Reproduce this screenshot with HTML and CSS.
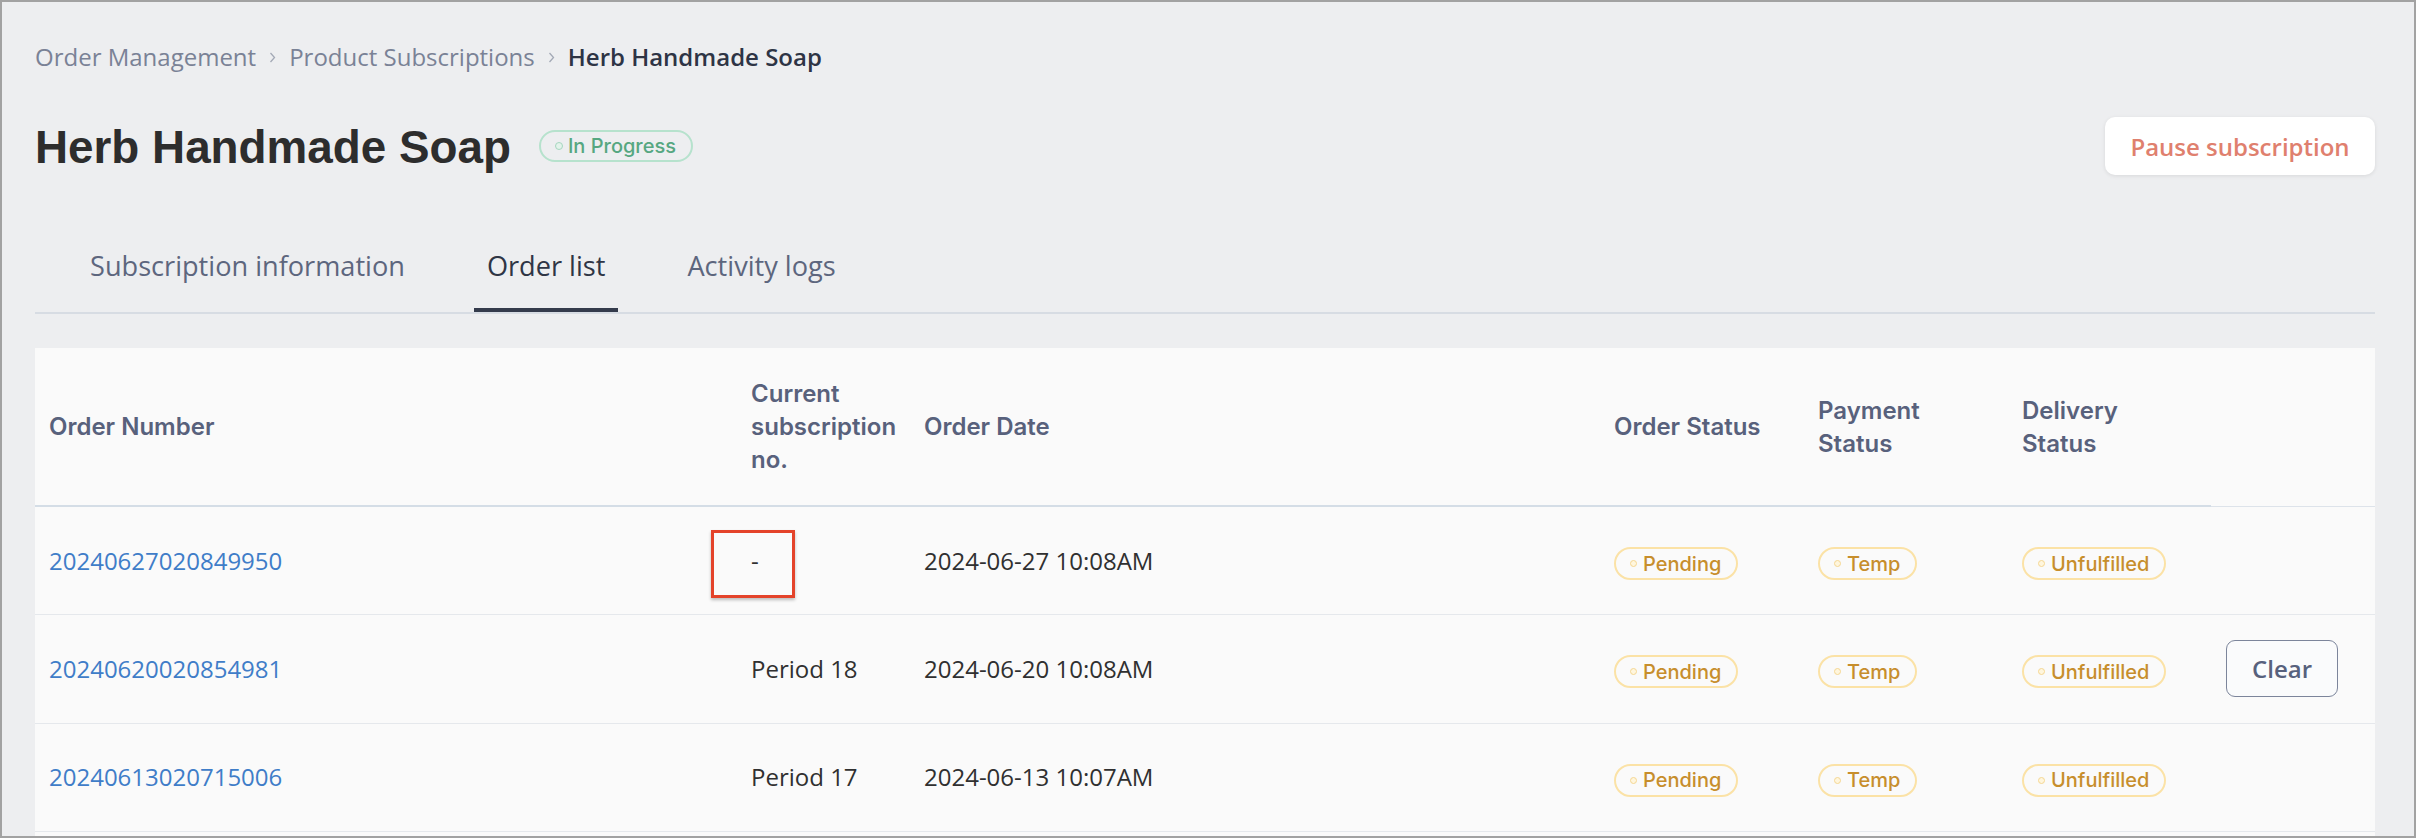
FILE: index.html
```html
<!DOCTYPE html>
<html lang="en">
<head>
<meta charset="utf-8">
<title>Herb Handmade Soap</title>
<link rel="stylesheet" href="styles.css">
</head>
<body>
<div class="frame">
  <nav class="crumbs">
    <span>Order Management</span>
    <svg class="sep" viewBox="0 0 7 11"><polyline points="1.5,1 5.5,5.5 1.5,10" fill="none" stroke="#a3a9b6" stroke-width="1.3"/></svg>
    <span>Product Subscriptions</span>
    <svg class="sep" viewBox="0 0 7 11"><polyline points="1.5,1 5.5,5.5 1.5,10" fill="none" stroke="#a3a9b6" stroke-width="1.3"/></svg>
    <span class="current">Herb Handmade Soap</span>
  </nav>

  <header class="head">
    <div class="title-wrap">
      <h1 class="title">Herb Handmade Soap</h1>
      <span class="badge badge-green"><span class="dot"></span>In Progress</span>
    </div>
    <button class="pause">Pause subscription</button>
  </header>

  <div class="tabs">
    <div class="tab">Subscription information</div>
    <div class="tab active">Order list</div>
    <div class="tab">Activity logs</div>
  </div>

  <section class="card">
    <table class="orders">
      <colgroup>
        <col class="c1"><col class="c2"><col class="c3"><col class="c4"><col class="c5"><col class="c6"><col class="c7">
      </colgroup>
      <thead>
        <tr>
          <th>Order Number</th>
          <th class="narrow">Current subscription no.</th>
          <th>Order Date</th>
          <th>Order Status</th>
          <th>Payment Status</th>
          <th>Delivery Status</th>
          <th class="last"></th>
        </tr>
      </thead>
      <tbody>
        <tr>
          <td><a class="link">20240627020849950</a></td>
          <td><span class="mark">-<span class="mark-box"></span></span></td>
          <td>2024-06-27 10:08AM</td>
          <td><span class="badge badge-yellow"><span class="dot"></span>Pending</span></td>
          <td><span class="badge badge-yellow"><span class="dot"></span>Temp</span></td>
          <td><span class="badge badge-yellow"><span class="dot"></span>Unfulfilled</span></td>
          <td class="act"></td>
        </tr>
        <tr>
          <td><a class="link">20240620020854981</a></td>
          <td>Period 18</td>
          <td>2024-06-20 10:08AM</td>
          <td><span class="badge badge-yellow"><span class="dot"></span>Pending</span></td>
          <td><span class="badge badge-yellow"><span class="dot"></span>Temp</span></td>
          <td><span class="badge badge-yellow"><span class="dot"></span>Unfulfilled</span></td>
          <td class="act"><button class="clear">Clear</button></td>
        </tr>
        <tr>
          <td><a class="link">20240613020715006</a></td>
          <td>Period 17</td>
          <td>2024-06-13 10:07AM</td>
          <td><span class="badge badge-yellow"><span class="dot"></span>Pending</span></td>
          <td><span class="badge badge-yellow"><span class="dot"></span>Temp</span></td>
          <td><span class="badge badge-yellow"><span class="dot"></span>Unfulfilled</span></td>
          <td class="act"></td>
        </tr>
      </tbody>
    </table>
  </section>
</div>
</body>
</html>
```
FILE: styles.css
```css
* { box-sizing: border-box; }
html, body { margin: 0; padding: 0; }
body { font-family: "Open Sans", "Noto Sans", sans-serif; background: #edeef0; }

.frame {
  width: 2416px;
  height: 838px;
  border: 2px solid #a2a2a2;
  background: #edeef0;
  padding: 38px 39px 0 33px;
  display: flex;
  flex-direction: column;
  overflow: hidden;
}

/* breadcrumb */
.crumbs {
  display: flex;
  align-items: center;
  gap: 13px;
  font-size: 24px;
  line-height: 34px;
  color: #7a8296;
}
.crumbs .sep { width: 7px; height: 11px; }
.crumbs .current { color: #2e3445; font-weight: 600; }

/* header */
.head {
  display: flex;
  align-items: center;
  justify-content: space-between;
  margin-top: 43px;
  height: 58px;
}
.title-wrap { display: flex; align-items: center; gap: 28px; }
.title {
  margin: 4px 0 0;
  font-family: "Liberation Sans", Arial, sans-serif;
  font-weight: 700;
  font-size: 45.8px;
  line-height: 46px;
  color: #2d2d2d;
}

.badge {
  display: inline-flex;
  align-items: center;
  border: 2px solid;
  border-radius: 18px;
  font-family: Inter, "Noto Sans", sans-serif;
  font-weight: 500;
  font-size: 20px;
  white-space: nowrap;
}
.badge .dot {
  width: 8px;
  height: 8px;
  border-radius: 50%;
  border: 1.5px solid;
  flex: none;
}
.badge-green {
  height: 32px;
  padding: 0 15px 0 14px;
  gap: 5px;
  border-color: #b6e2cd;
  color: #56a781;
}
.badge-green .dot { border-color: #a6d6bf; background: #e3f3eb; }

.badge-yellow {
  height: 33px;
  padding: 0 15px 0 14px;
  gap: 6px;
  border-color: #fbe2a6;
  color: #c78e2c;
}
.badge-yellow .dot { width: 7px; height: 7px; border-color: #f5d792; background: #fff6dd; }

.pause {
  width: 270px;
  height: 58px;
  border: none;
  background: #ffffff;
  border-radius: 10px;
  box-shadow: 0 1px 4px rgba(0, 0, 0, 0.09);
  font-family: "Open Sans", sans-serif;
  font-weight: 600;
  font-size: 24px;
  color: #df806e;
  padding: 0;
}

/* tabs */
.tabs {
  display: flex;
  gap: 56px;
  margin-top: 71px;
  padding-left: 42px;
  border-bottom: 2px solid #d7dce3;
}
.tab {
  padding: 0 13px 22px;
  font-size: 27.15px;
  line-height: 40px;
  color: #5d667e;
  border-bottom: 4px solid transparent;
}
.tab.active { color: #2f3545; border-bottom-color: #343b4c; }

/* card + table */
.card {
  margin-top: 34px;
  flex: 1;
  background: #fafafa;
}
.orders {
  width: 100%;
  table-layout: fixed;
  border-collapse: collapse;
}
.c1 { width: 702px; }
.c2 { width: 173px; }
.c3 { width: 690px; }
.c4 { width: 204px; }
.c5 { width: 204px; }
.c6 { width: 203px; }
.c7 { width: 164px; }

.orders th {
  height: 158px;
  padding: 0 24px 0 14px;
  text-align: left;
  vertical-align: middle;
  font-family: Inter, "Noto Sans", sans-serif;
  font-weight: 600;
  font-size: 24px;
  line-height: 33px;
  color: #58617c;
  border-bottom: 2px solid #d4dde6;
}
.orders th.narrow { padding-right: 6px; }
.orders th.last { border-bottom: 1px solid #dde3ea; }

.orders td {
  height: 108.5px;
  padding: 0 10px 0 14px;
  vertical-align: middle;
  font-size: 24px;
  line-height: 34px;
  color: #303030;
  border-bottom: 1px solid #e5e8ec;
  white-space: nowrap;
}
.orders td.act { padding-left: 15px; }
.link { color: #3f7dc8; text-decoration: none; }

.mark { position: relative; display: inline-block; line-height: 34px; }
.mark-box {
  position: absolute;
  left: -40px;
  top: -14px;
  width: 84px;
  height: 68px;
  border: 3px solid #e4432a;
  box-shadow: 0 2px 3px rgba(0, 0, 0, 0.25);
}

.clear {
  width: 112px;
  height: 57px;
  border: 1.5px solid #7c859b;
  border-radius: 9px;
  background: #fafbfc;
  font-family: "Open Sans", sans-serif;
  font-weight: 600;
  font-size: 24px;
  color: #57617d;
  padding: 0;
}
```
